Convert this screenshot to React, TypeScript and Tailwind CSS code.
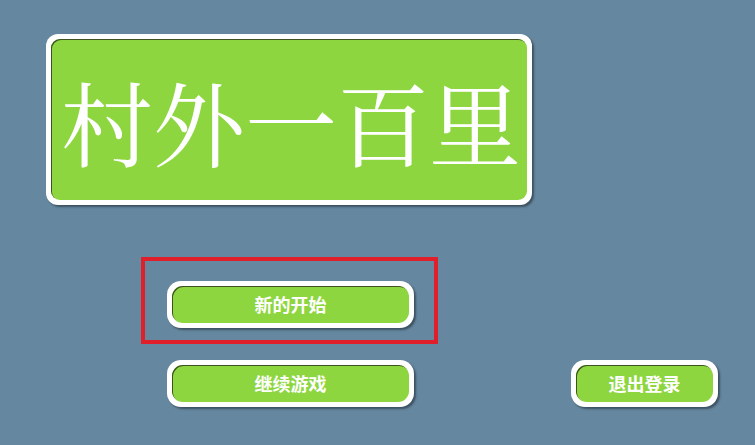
import React from "react";

function GameButton({ label, width }: { label: string; width: string }) {
  return (
    <div className={`${width} h-[47px] rounded-[14px] bg-white p-[5px] shadow-[2px_2px_2px_rgba(30,40,50,0.55)]`}>
      <div className="flex h-full w-full items-center justify-center rounded-[11px] bg-[#8ed63f] shadow-[inset_1px_1px_0_#3d5220]">
        <span className="text-[18px] font-bold text-white" style={{ fontFamily: '"Noto Sans CJK SC", "Noto Sans", sans-serif' }}>
          {label}
        </span>
      </div>
    </div>
  );
}

export default function App() {
  return (
    <div className="flex h-[445px] w-[755px] flex-col overflow-hidden bg-[#65879f] pt-[34px]">
      {/* Title */}
      <div className="ml-[46px] h-[171px] w-[486px] rounded-[12px] bg-white p-[5px] shadow-[2px_2px_2px_rgba(30,40,50,0.55)]">
        <div className="flex h-full w-full items-center justify-center rounded-[9px] bg-[#8ed63f] pl-[4px] shadow-[inset_1px_1px_0_#3d5220]">
          <span
            className="text-[92px] leading-none text-white"
            style={{ fontFamily: '"Noto Serif CJK SC", "Noto Serif CJK JP", "AR PL UMing CN", serif' }}
          >
            村外一百里
          </span>
        </div>
      </div>

      {/* Selected button */}
      <div className="ml-[141px] mt-[52px] h-[87px] w-[297px] border-4 border-[#e11f2a] pl-[22px] pt-[20px]">
        <GameButton label="新的开始" width="w-[247px]" />
      </div>

      {/* Bottom row */}
      <div className="mt-[16px] flex items-start gap-[157px] pl-[167px]">
        <GameButton label="继续游戏" width="w-[247px]" />
        <GameButton label="退出登录" width="w-[147px]" />
      </div>
    </div>
  );
}
